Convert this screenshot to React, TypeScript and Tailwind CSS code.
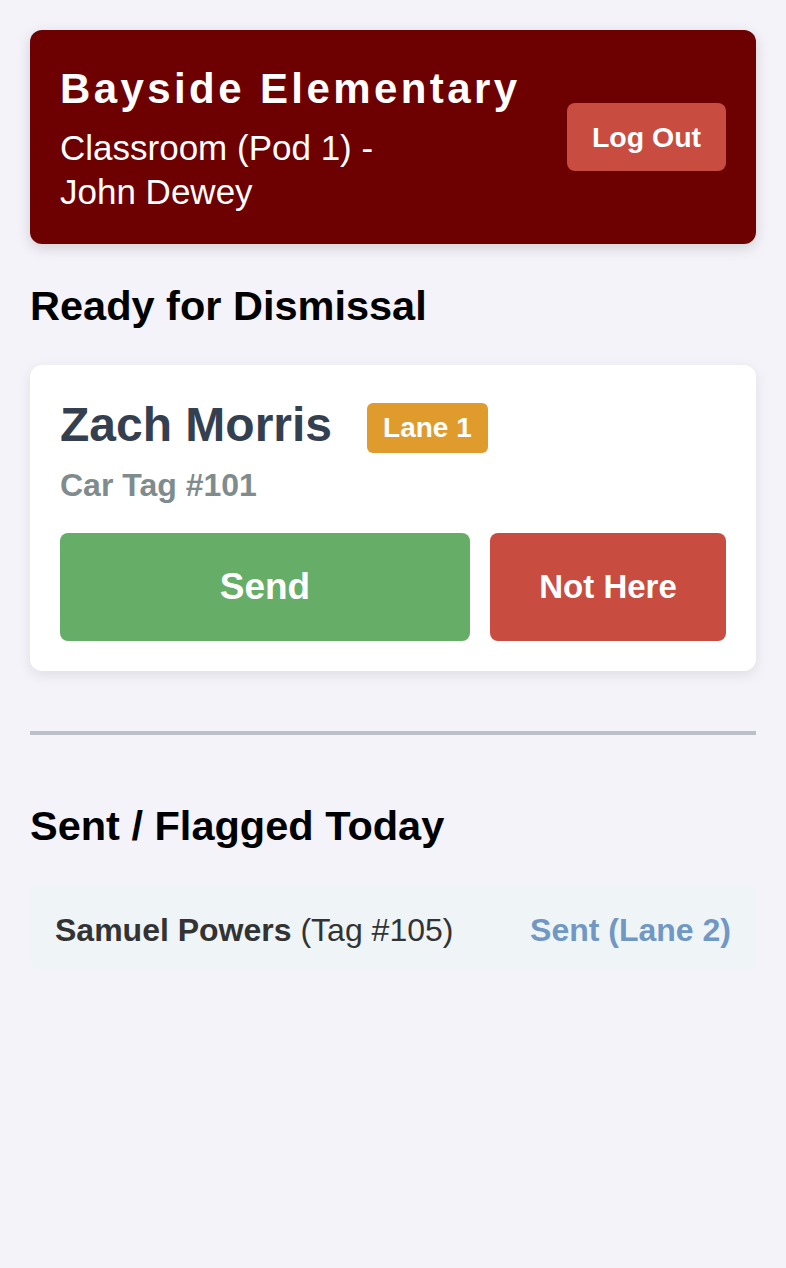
import React from 'react';

const font = "font-['Liberation_Sans','Helvetica_Neue',Arial,sans-serif]";

const StudentCard = () => (
  <div className="rounded-[12px] bg-white px-[30px] pb-[30px] pt-[30px] shadow-[0_4px_14px_rgba(0,0,0,0.09)]">
    <div className="flex items-start">
      <h3 className="text-[48px] font-bold leading-[60px] text-[#34404f]">Zach Morris</h3>
      <span className="ml-[35px] mt-[8px] rounded-[6px] bg-[#e09b2d] px-[16px] py-[9px] text-[28px] font-bold leading-[32px] text-white">
        Lane 1
      </span>
    </div>
    <p className="mt-[13px] text-[32px] font-bold leading-[35px] text-[#7f8c8d]">Car Tag #101</p>
    <div className="mt-[30px] flex gap-[20px]">
      <button className="h-[108px] w-[410px] rounded-[8px] bg-[#66ad68] text-[37px] font-bold text-white">
        Send
      </button>
      <button className="h-[108px] flex-1 rounded-[8px] bg-[#c84c40] text-[33px] font-bold text-white">
        Not Here
      </button>
    </div>
  </div>
);

export default function App() {
  return (
    <div className={`min-h-[1268px] bg-[#f3f3f9] p-[30px] ${font}`}>
      <header className="flex items-center gap-[20px] rounded-[12px] bg-[#6d0000] px-[30px] py-[30px] shadow-[0_4px_14px_rgba(0,0,0,0.15)]">
        <div className="min-w-0 flex-1">
          <h1 className="text-[42px] font-bold leading-[58px] tracking-[3.4px] text-white">Bayside Elementary</h1>
          <p className="mt-[8px] max-w-[380px] text-[35px] leading-[44px] text-white">
            Classroom (Pod 1) - John Dewey
          </p>
        </div>
        <button className="h-[68px] w-[159px] shrink-0 rounded-[8px] bg-[#c84c40] text-[28.5px] font-bold text-white">
          Log Out
        </button>
      </header>

      <h2 className="mt-[38px] text-[41.5px] font-bold leading-[48px] text-black">Ready for Dismissal</h2>
      <div className="mt-[35px]">
        <StudentCard />
      </div>

      <hr className="mt-[60px] border-0 border-t-[4px] border-[#bcc1c9]" />

      <h2 className="mt-[67px] text-[41.5px] font-bold leading-[48px] text-black">Sent / Flagged Today</h2>
      <div className="mt-[35px] flex items-center justify-between rounded-[10px] bg-[#eff5f7] px-[25px] pb-[22px] pt-[28px] text-[32px] leading-[35px]">
        <span className="text-[#333333]">
          <span className="font-bold">Samuel Powers</span> (Tag #105)
        </span>
        <span className="font-bold text-[#7197c4]">Sent (Lane 2)</span>
      </div>
    </div>
  );
}
